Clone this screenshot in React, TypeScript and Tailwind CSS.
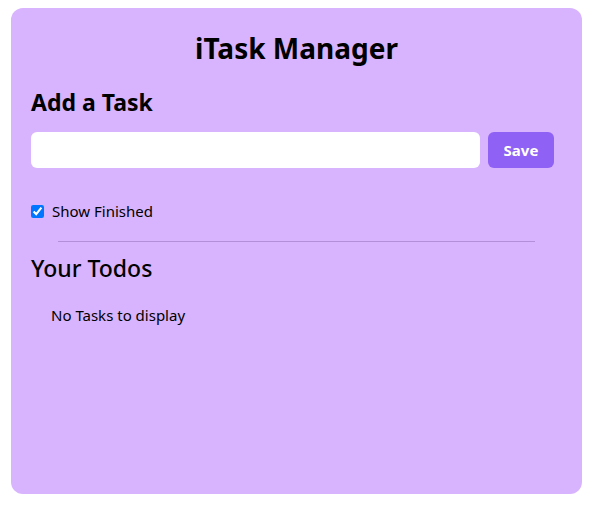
export default function App() {
  return (
    <div className="min-h-[506px] bg-white py-2 px-[11px] font-['Noto_Sans',sans-serif] text-black">
      <div className="min-h-[486px] rounded-xl bg-[#d8b4fe] px-5 pt-[22px]">
        <h1 className="text-center text-[28px] font-bold leading-9">iTask Manager</h1>

        {/* Add task */}
        <div className="mt-[21px] flex flex-col">
          <h2 className="text-[23px] font-bold leading-[30px]">Add a Task</h2>
          <div className="mt-[15px] mr-2 flex gap-2">
            <input
              type="text"
              className="h-9 flex-1 rounded-md bg-white px-3 outline-none"
            />
            <button className="h-9 w-[66px] rounded-md bg-[#9061f5] text-[15px] font-bold text-white">
              Save
            </button>
          </div>
        </div>

        <label className="mt-[33px] flex items-center gap-2 text-[15px] leading-5">
          <input type="checkbox" defaultChecked className="h-[13px] w-[13px]" />
          Show Finished
        </label>

        <div className="mx-auto mt-[20px] h-px w-[477px] bg-[#b28fd8]" />

        <h2 className="mt-[11px] text-[23px] font-medium leading-[30px]">Your Todos</h2>
        <div className="ml-5 mt-[22px] flex flex-col">
          <div className="text-[15px] leading-5">No Tasks to display</div>
        </div>
      </div>
    </div>
  );
}
